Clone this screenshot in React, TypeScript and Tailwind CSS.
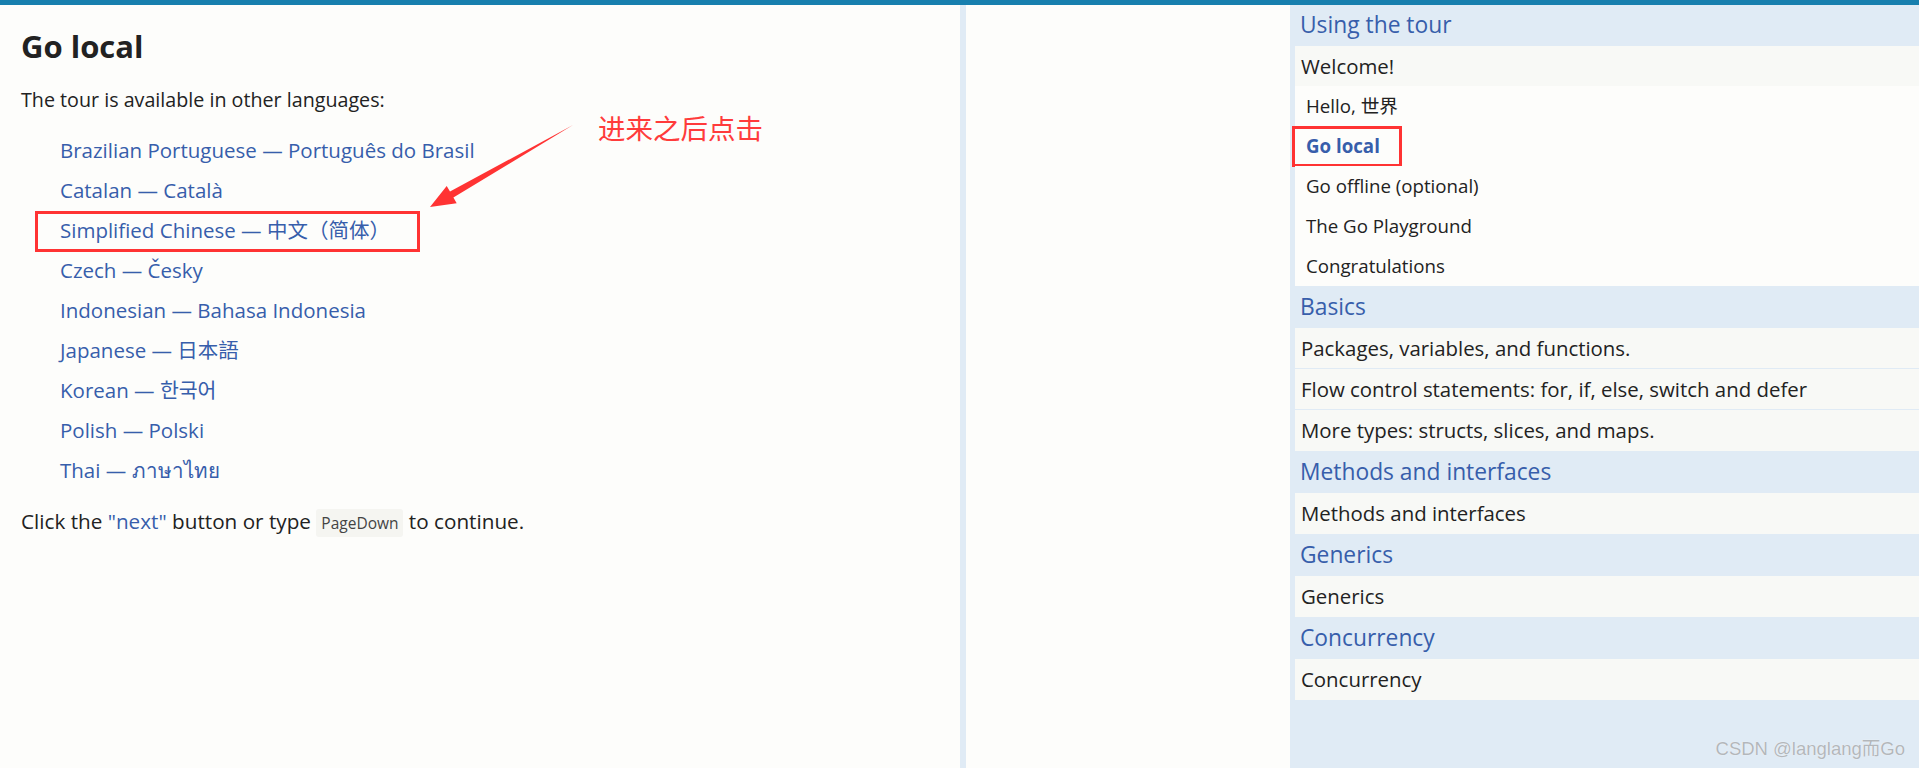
const languages = [
  'Brazilian Portuguese — Português do Brasil',
  'Catalan — Català',
  'Simplified Chinese — 中文（简体）',
  'Czech — Česky',
  'Indonesian — Bahasa Indonesia',
  'Japanese — 日本語',
  'Korean — 한국어',
  'Polish — Polski',
  'Thai — ภาษาไทย',
]

interface Lesson {
  title: string
  pages?: string[]
}

interface Section {
  title: string
  lessons: Lesson[]
}

const sections: Section[] = [
  {
    title: 'Using the tour',
    lessons: [
      {
        title: 'Welcome!',
        pages: ['Hello, 世界', 'Go local', 'Go offline (optional)', 'The Go Playground', 'Congratulations'],
      },
    ],
  },
  {
    title: 'Basics',
    lessons: [
      { title: 'Packages, variables, and functions.' },
      { title: 'Flow control statements: for, if, else, switch and defer' },
      { title: 'More types: structs, slices, and maps.' },
    ],
  },
  { title: 'Methods and interfaces', lessons: [{ title: 'Methods and interfaces' }] },
  { title: 'Generics', lessons: [{ title: 'Generics' }] },
  { title: 'Concurrency', lessons: [{ title: 'Concurrency' }] },
]

function Content() {
  return (
    <div className="relative w-[960px] shrink-0 pl-[21px] pt-[21px] text-[#222]">
      <h1 className="text-[31px] font-bold leading-[40px]">Go local</h1>
      <p className="mt-[19px] text-[19.7px] leading-[30px]">The tour is available in other languages:</p>

      <ul className="mt-[15px] pl-[39px] text-[20.5px] text-[#375eab]">
        {languages.map((lang, i) => (
          <li key={lang} className="relative h-10 leading-[40px]">
            {lang}
            {i === 2 && (
              <span className="absolute left-[-25px] top-[1px] h-[41px] w-[385px] border-[3px] border-[#ff3333]" />
            )}
          </li>
        ))}
      </ul>

      <p className="mt-[16px] text-[20.7px] leading-[30px]">
        Click the <span className="text-[#375eab]">"next"</span> button or type{' '}
        <code className="rounded-[3px] bg-[#f5f5f1] px-[5px] py-[3px] font-['Open_Sans',sans-serif] text-[15.5px] text-[#444]">
          PageDown
        </code>{' '}
        to continue.
      </p>

      {/* annotation */}
      <svg className="pointer-events-none absolute left-0 top-0" width="960" height="300" viewBox="0 0 960 300">
        <polygon
          points="573,120 453.4,192.6 456.7,198.3 430,202 446.7,180.9 450,186.6"
          fill="#ff3333"
        />
      </svg>
      <span className="absolute left-[598px] top-[108px] text-[27.5px] leading-[28px] text-[#ff3b3b] font-['Noto_Sans_CJK_SC',sans-serif]">
        进来之后点击
      </span>
    </div>
  )
}

function Sidebar() {
  return (
    <div className="flex-1 bg-[#e0ebf5]">
      {sections.map((section, si) => (
        <div key={section.title}>
          <div
            className={`${si === 0 ? 'h-[41px]' : 'h-[42px]'} flex items-center pl-[10px] text-[22.8px] text-[#375eab]`}
          >
            {section.title}
          </div>
          {section.lessons.map((lesson, li) => (
            <div key={lesson.title} className="ml-[5px]">
              <div
                className={`flex items-center bg-[#f8f9f6] pl-[6px] text-[20.4px] text-[#222] ${
                  lesson.pages ? 'h-10' : li < section.lessons.length - 1 ? 'h-[41px] border-b border-[#e0ebf5]' : 'h-[41px]'
                }`}
              >
                {lesson.title}
              </div>
              {lesson.pages?.map((page) => (
                <div
                  key={page}
                  className={`relative flex h-10 items-center bg-[#fdfdfb] pl-[11px] text-[18.7px] ${
                    page === 'Go local' ? 'font-bold text-[#375eab]' : 'text-[#222]'
                  }`}
                >
                  {page}
                  {page === 'Go local' && (
                    <span className="absolute left-[-3px] top-0 h-[41px] w-[110px] border-[3px] border-[#ff3333]" />
                  )}
                </div>
              ))}
            </div>
          ))}
        </div>
      ))}
    </div>
  )
}

export default function App() {
  return (
    <div className="relative h-[768px] w-[1919px] overflow-hidden bg-[#fdfdfb] font-['Open_Sans','Noto_Sans_CJK_SC',sans-serif]">
      <div className="h-[5px] bg-[#177fae]" />
      <div className="flex h-[763px]">
        <Content />
        <div className="w-[6px] shrink-0 bg-[#e0ebf5]" />
        <div className="w-[324px] shrink-0" />
        <Sidebar />
      </div>
      <span className="absolute bottom-[5px] right-[14px] text-[18.5px] text-[#b3b7bb] font-['Liberation_Sans','Noto_Sans_CJK_SC',sans-serif] [text-shadow:0_0_1px_#fff]">
        CSDN @langlang而Go
      </span>
    </div>
  )
}
